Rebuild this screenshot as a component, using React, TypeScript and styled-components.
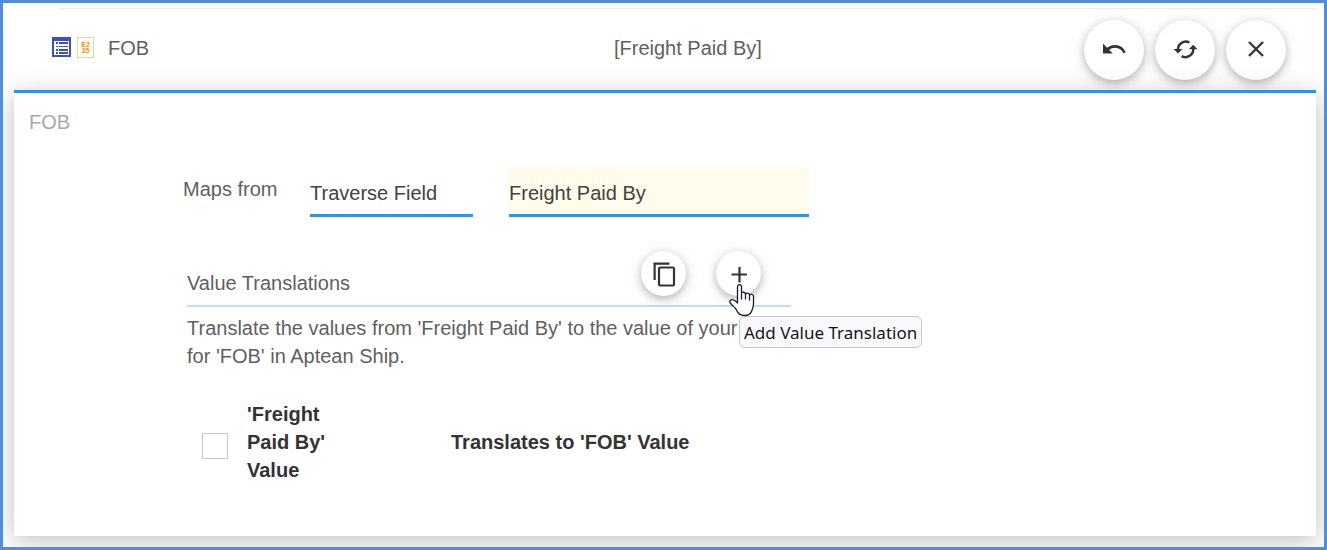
import React from "react";
import styled, { createGlobalStyle } from "styled-components";

const Global = createGlobalStyle`
  *, *::before, *::after { box-sizing: border-box; }
  body {
    margin: 0;
    background: #fff;
    color: #5f5f5f;
    font-family: "Liberation Sans", Arial, sans-serif;
    font-size: 20px;
    line-height: 28px;
  }
`;

const Frame = styled.main`
  display: flex;
  flex-direction: column;
  min-height: 100vh;
  border: 3px solid #528dd5;
  padding: 5px 8px 11px 11px;
  overflow: hidden;
`;

const Rule = styled.div`
  height: 1px;
  margin-left: 45px;
  background: #ececec;
`;

const Header = styled.header`
  display: grid;
  grid-template-columns: 562fr 470fr auto;
  align-items: center;
  height: 81px;
  padding: 0 30px 0 38px;
`;

const HeaderTitle = styled.h1`
  display: flex;
  align-items: center;
  margin: 0;
  padding-bottom: 4px;
  font-size: 20px;
  font-weight: 400;
  line-height: 28px;
`;

const TitleIcons = styled.span`
  display: flex;
  gap: 6px;
  margin-right: 14px;
`;

const HeaderField = styled.div`
  padding-bottom: 4px;
`;

const Actions = styled.div`
  display: flex;
  gap: 11px;
`;

const RoundButton = styled.button<{ $size: number }>`
  display: flex;
  align-items: center;
  justify-content: center;
  width: ${(p) => p.$size}px;
  height: ${(p) => p.$size}px;
  padding: 0;
  border: 0;
  border-radius: 50%;
  background: #fff;
  color: #333;
  box-shadow: 0 3px 8px rgba(0, 0, 0, 0.26), 0 2px 20px rgba(0, 0, 0, 0.07);
  cursor: pointer;
`;

const Panel = styled.section`
  flex: 1;
  padding: 15px;
  border-top: 3px solid #2196f3;
  background: #fff;
  box-shadow: 0 5px 24px rgba(0, 0, 0, 0.25);
`;

const PanelTitle = styled.h2`
  margin: 0 0 30px;
  color: #a9a9a9;
  font-size: 20px;
  font-weight: 400;
  line-height: 28px;
`;

const MapsRow = styled.div`
  display: flex;
  align-items: flex-start;
  margin-left: 154px;
`;

const MapsLabel = styled.label`
  width: 127px;
  padding-top: 9px;
`;

const SourceSelect = styled.select`
  appearance: none;
  width: 163px;
  height: 51px;
  margin-right: 36px;
  padding: 6px 0 0;
  border: 0;
  border-bottom: 3px solid #2196f3;
  border-radius: 0;
  background: transparent;
  color: #424242;
  font: inherit;
`;

const FieldInput = styled.input`
  width: 300px;
  height: 51px;
  padding: 6px 0 0;
  border: 0;
  border-bottom: 3px solid #2196f3;
  background: #fffceb;
  color: #424242;
  font: inherit;
`;

const Translations = styled.section`
  max-width: 620px;
  margin: 34px 0 0 158px;
`;

const TranslationsHead = styled.div`
  display: flex;
  align-items: flex-start;
  gap: 30px;
  max-width: 604px;
  height: 56px;
  padding-right: 30px;
  border-bottom: 2px solid #bbdefb;
`;

const TranslationsTitle = styled.h3`
  flex: 1;
  margin: 0;
  padding-top: 18px;
  font-size: 20px;
  font-weight: 400;
  line-height: 28px;
`;

const Hint = styled.p`
  margin: 7px 0 30px;
`;

const TooltipAnchor = styled.div`
  position: relative;
`;

const Tooltip = styled.div`
  position: absolute;
  top: 65px;
  left: 23px;
  height: 32px;
  padding: 0 4px;
  border: 1px solid #c6c6d2;
  border-radius: 6px;
  background: #f9f9fc;
  color: #15141a;
  font-family: "Noto Sans", "Open Sans", sans-serif;
  font-size: 17px;
  line-height: 31px;
  white-space: nowrap;
`;

const Pointer = styled.svg`
  position: absolute;
  top: 32px;
  left: 13px;
  pointer-events: none;
`;

const Table = styled.table`
  border-collapse: collapse;
  color: #333;
  text-align: left;
  th { padding: 0; }
`;

const CheckCell = styled.th`
  width: 60px;
`;

const SourceCell = styled.th`
  width: 204px;
  span { display: block; width: 90px; }
`;

const Check = styled.input`
  appearance: none;
  display: block;
  width: 26px;
  height: 26px;
  margin: 8px 0 0 15px;
  border: 1px solid #c8c8c8;
  background: #fff;
`;

const ListIcon = () => (
  <svg width="19" height="20" viewBox="0 0 19 20" shapeRendering="crispEdges" aria-hidden="true">
    <path fill="#3f51b5" d="M0 0h19v20H0z" />
    <path fill="#fff" d="M2 4h15v14H2z" />
    <path fill="#3f51b5" d="M4 5h2v2H4zM7 5h9v2H7zM4 9h2v1H4zM7 9h9v1H7zM4 12h2v2H4zM7 12h9v2H7zM4 15h2v2H4zM7 15h9v2H7z" />
  </svg>
);

const CodeIcon = () => (
  <svg width="17" height="21" viewBox="0 0 17 21" aria-hidden="true">
    <rect x="0.5" y="0.5" width="16" height="20" fill="#fff" stroke="#ffcc80" />
    <g fill="#fb8c00" fontFamily="Liberation Sans" fontSize="7" fontWeight="700" textAnchor="middle">
      <text x="8.5" y="10">E2</text>
      <text x="8.5" y="16">35</text>
    </g>
  </svg>
);

const UndoIcon = () => (
  <svg width="28" height="28" viewBox="0 0 28 28" aria-hidden="true">
    <path fill="#333" d="M3 7.600v10h9.800l-3.600-3.600c1.600-1.400 3.400-2.300 6-2.300 4 0 6.800 2.100 8.100 5.600l2.300-.9c-1.600-4.600-5.400-7.500-10.400-7.500-3.300 0-6 1.200-8.200 2.900z" />
  </svg>
);

const SyncIcon = () => (
  <svg width="28" height="28" viewBox="0 0 28 28" aria-hidden="true">
    <g fill="none" stroke="#333" strokeWidth="2.4">
      <path d="M7 14A7.800 7.800 0 0 1 18.400 6.500" />
      <path d="M22.200 12.500A7.800 7.800 0 0 1 10.600 20.100" />
    </g>
    <path fill="#333" d="M2.600 13h8.800L7 17.400zM17.800 13.200h8.800l-4.400-4.400z" />
  </svg>
);

const CloseIcon = () => (
  <svg width="28" height="28" viewBox="0 0 28 28" aria-hidden="true">
    <path d="M7 6l14 14M21 6l-14 14" stroke="#333" strokeWidth="2.3" />
  </svg>
);

const CopyIcon = () => (
  <svg width="28" height="28" viewBox="0 0 28 28" fill="none" stroke="#333" strokeWidth="2.2" aria-hidden="true">
    <path d="M4.600 20V3.600H19.500" />
    <rect x="9" y="7.500" width="15" height="18" rx="1.200" />
  </svg>
);

const PlusIcon = () => (
  <svg width="28" height="28" viewBox="0 0 28 28" aria-hidden="true">
    <path d="M6.500 14.500h15.500M14.500 7v15.500" stroke="#333" strokeWidth="2.2" />
  </svg>
);

export default function App() {
  return (
    <>
      <Global />
      <Frame>
        <Rule />
        <Header>
          <HeaderTitle>
            <TitleIcons>
              <ListIcon />
              <CodeIcon />
            </TitleIcons>
            FOB
          </HeaderTitle>
          <HeaderField>[Freight Paid By]</HeaderField>
          <Actions>
            <RoundButton type="button" $size={60} aria-label="Undo">
              <UndoIcon />
            </RoundButton>
            <RoundButton type="button" $size={60} aria-label="Refresh">
              <SyncIcon />
            </RoundButton>
            <RoundButton type="button" $size={60} aria-label="Close">
              <CloseIcon />
            </RoundButton>
          </Actions>
        </Header>

        <Panel>
          <PanelTitle>FOB</PanelTitle>
          <MapsRow>
            <MapsLabel htmlFor="source">Maps from</MapsLabel>
            <SourceSelect id="source" defaultValue="field">
              <option value="field">Traverse Field</option>
            </SourceSelect>
            <FieldInput aria-label="Traverse field name" defaultValue="Freight Paid By" />
          </MapsRow>

          <Translations>
            <TranslationsHead>
              <TranslationsTitle>Value Translations</TranslationsTitle>
              <RoundButton type="button" $size={45} aria-label="Copy">
                <CopyIcon />
              </RoundButton>
              <TooltipAnchor>
                <RoundButton type="button" $size={45} aria-describedby="add-tip" aria-label="Add">
                  <PlusIcon />
                </RoundButton>
                <Tooltip id="add-tip" role="tooltip">Add Value Translation</Tooltip>
                <Pointer width="26" height="34" viewBox="0 0 26 34" aria-hidden="true">
                  <path
                    fill="#fff"
                    stroke="#1b1b2b"
                    strokeWidth="1.3"
                    strokeLinejoin="round"
                    strokeLinecap="round"
                    d="M8.500 20V4c0-3.300 4-3.300 4 0v6.500c.3-2 3.800-1.500 4 .5v.5c.3-2 3.800-1.500 4 .3v.7c.3-1.800 3.800-1.500 4 .5V21c0 3-1 5-2 7.500-1 2.500-3.500 4-7 4-4.500 0-6.500-2-8-5.500C6 24 3.500 23 1.300 20 0 18 2 16 4.500 17c2 .8 3 2 4 3zM12.500 10.500V16M16.500 11.500V16M20.500 12.500V17"
                  />
                </Pointer>
              </TooltipAnchor>
            </TranslationsHead>
            <Hint>
              Translate the values from 'Freight Paid By' to the value of your choice for 'FOB' in Aptean Ship.
            </Hint>
            <Table>
              <thead>
                <tr>
                  <CheckCell>
                    <Check type="checkbox" aria-label="Select all translations" />
                  </CheckCell>
                  <SourceCell scope="col">
                    <span>'Freight Paid By' Value</span>
                  </SourceCell>
                  <th scope="col">Translates to 'FOB' Value</th>
                </tr>
              </thead>
            </Table>
          </Translations>
        </Panel>
      </Frame>
    </>
  );
}
